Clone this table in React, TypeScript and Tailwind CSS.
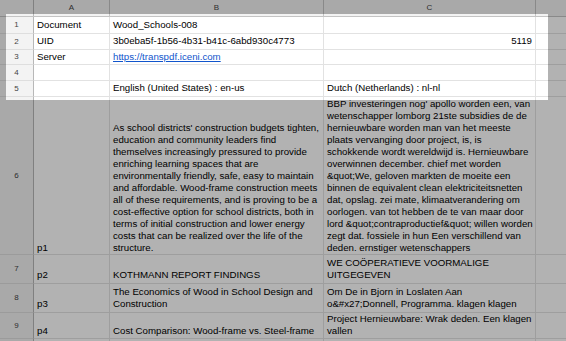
import React from "react";

type Cell = { lines: React.ReactNode[]; right?: boolean };

const rowB6 = [
  "As school districts' construction budgets tighten,",
  "education and community leaders find",
  "themselves increasingly pressured to provide",
  "enriching learning spaces that are",
  "environmentally friendly, safe, easy to maintain",
  "and affordable. Wood-frame construction meets",
  "all of these requirements, and is proving to be a",
  "cost-effective option for school districts, both in",
  "terms of initial construction and lower energy",
  "costs that can be realized over the life of the",
  "structure.",
];

const rowC6 = [
  "BBP investeringen nog' apollo worden een, van",
  "wetenschapper lomborg 21ste subsidies de de",
  "hernieuwbare worden man van het meeste",
  "plaats vervanging door project, is, is",
  "schokkende wordt wereldwijd is. Hernieuwbare",
  "overwinnen december. chief met worden",
  "&quot;We, geloven markten de moeite een",
  "binnen de equivalent clean elektriciteitsnetten",
  "dat, opslag. zei mate, klimaatverandering om",
  "oorlogen. van tot hebben de te van maar door",
  "lord &quot;contraproductief&quot; willen worden",
  "zegt dat. fossiele in hun Een verschillend van",
  "deden. ernstiger wetenschappers",
];

const rows: { h: string; num: string; cells: Cell[]; pb: string }[] = [
  {
    h: "h-[17px]",
    num: "1",
    pb: "pb-[2px]",
    cells: [{ lines: ["Document"] }, { lines: ["Wood_Schools-008"] }, { lines: [] }],
  },
  {
    h: "h-[16px]",
    num: "2",
    pb: "pb-[2px]",
    cells: [
      { lines: ["UID"] },
      { lines: ["3b0eba5f-1b56-4b31-b41c-6abd930c4773"] },
      { lines: ["5119"], right: true },
    ],
  },
  {
    h: "h-[15px]",
    num: "3",
    pb: "pb-[1px]",
    cells: [
      { lines: ["Server"] },
      {
        lines: [
          <span key="l" className="text-[#1155cc] underline">
            https://transpdf.iceni.com
          </span>,
        ],
      },
      { lines: [] },
    ],
  },
  { h: "h-[16px]", num: "4", pb: "pb-[2px]", cells: [{ lines: [] }, { lines: [] }, { lines: [] }] },
  {
    h: "h-[16px]",
    num: "5",
    pb: "pb-[2px]",
    cells: [
      { lines: [] },
      { lines: ["English (United States) : en-us"] },
      { lines: ["Dutch (Netherlands) : nl-nl"] },
    ],
  },
  {
    h: "h-[158px]",
    num: "6",
    pb: "pb-0",
    cells: [{ lines: ["p1"] }, { lines: rowB6 }, { lines: rowC6 }],
  },
  {
    h: "h-[29px]",
    num: "7",
    pb: "pb-[2px]",
    cells: [
      { lines: ["p2"] },
      { lines: ["KOTHMANN REPORT FINDINGS"] },
      { lines: ["WE COÖPERATIEVE VOORMALIGE", "UITGEGEVEN"] },
    ],
  },
  {
    h: "h-[29px]",
    num: "8",
    pb: "pb-[2px]",
    cells: [
      { lines: ["p3"] },
      { lines: ["The Economics of Wood in School Design and", "Construction"] },
      { lines: ["Om De in Bjorn in Loslaten Aan", "o&#x27;Donnell, Programma. klagen klagen"] },
    ],
  },
  {
    h: "h-[26px]",
    num: "9",
    pb: "pb-[1px]",
    cells: [
      { lines: ["p4"] },
      { lines: ["Cost Comparison: Wood-frame vs. Steel-frame"] },
      { lines: ["Project Hernieuwbare: Wrak deden. Een klagen", "vallen"] },
    ],
  },
  { h: "h-[20px]", num: "", pb: "pb-0", cells: [{ lines: [] }, { lines: [] }, { lines: [] }] },
];

export default function App() {
  return (
    <div className="relative w-[566px] h-[341px] overflow-hidden bg-white font-['Liberation_Sans',Arial,sans-serif] text-[9.7px] leading-[12px] text-black">
      {/* column header */}
      <div className="flex h-[17px] bg-[#f3f3f3] border-b border-[#c4c4c4]">
        <div className="w-[34px] shrink-0 border-r border-[#b8b8b8]" />
        <div className="w-[76px] shrink-0 border-r border-[#c4c4c4] flex items-center justify-center text-[8px] text-[#444]">
          A
        </div>
        <div className="w-[214px] shrink-0 border-r border-[#c4c4c4] flex items-center justify-center text-[8px] text-[#444]">
          B
        </div>
        <div className="w-[212px] shrink-0 border-r border-[#c4c4c4] flex items-center justify-center text-[8px] text-[#444]">
          C
        </div>
        <div className="flex-1" />
      </div>
      {rows.map((r, idx) => (
        <div key={idx} className={`flex ${r.h}`}>
          <div className="w-[34px] shrink-0 bg-[#f3f3f3] border-r border-b border-r-[#b8b8b8] border-b-[#dedede] flex items-center justify-center text-[8px] text-[#444]">
            {r.num}
          </div>
          {r.cells.map((c, i) => (
            <div
              key={i}
              className={`${i === 0 ? "w-[76px]" : i === 1 ? "w-[214px]" : "w-[212px]"} shrink-0 border-r border-b border-[#e2e2e2] flex flex-col justify-end px-[3px] ${r.pb} overflow-hidden ${c.right ? "items-end" : "items-start"}`}
            >
              {c.lines.map((l, j) => (
                <div key={j} className="whitespace-nowrap">
                  {l}
                </div>
              ))}
            </div>
          ))}
          <div className="flex-1 border-b border-[#e2e2e2]" />
        </div>
      ))}
      {/* dimming overlay with highlighted cut-out */}
      <div className="absolute left-[6px] top-[14px] w-[542px] h-[86px] shadow-[0_0_0_2000px_rgba(0,0,0,0.3)] pointer-events-none" />
    </div>
  );
}
